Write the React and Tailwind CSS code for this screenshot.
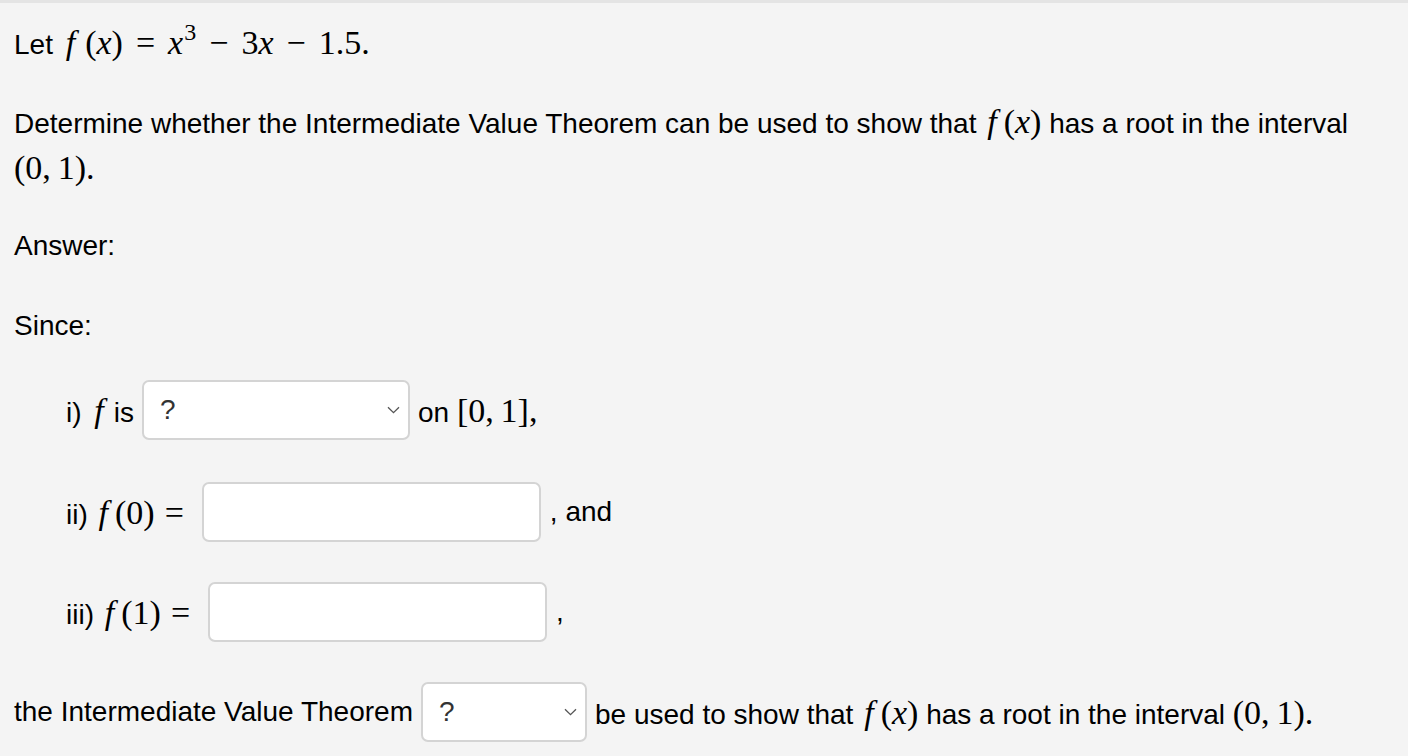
import React from "react";

const M = ({ children, className = "" }) => (
  <span className={"font-['Liberation_Serif',serif] text-[34px] " + className}>{children}</span>
);
const I = ({ children }) => <span className="italic">{children}</span>;
const Op = ({ children }) => <span className="mx-[10px]">{children}</span>;
const OpW = ({ children }) => <span className="mx-[13px]">{children}</span>;
const F = () => <span className="mr-[7px] ml-[3px] italic">f</span>;
const FW = () => <span className="mr-[10px] ml-[5px] italic">f</span>;

const Chevron = () => (
  <svg width="13" height="8" viewBox="0 0 13 8" className="shrink-0">
    <path d="M1 1.2 L6.5 6.7 L12 1.2" fill="none" stroke="#555" strokeWidth="1.3" />
  </svg>
);

const Select = ({ w }) => (
  <div className={"flex h-[60px] items-center justify-between rounded-[7px] border-2 border-[#d4d4d4] bg-white pl-[16px] pr-[8px] " + w}>
    <span className="text-[28px] text-[#333]">?</span>
    <Chevron />
  </div>
);

const Input = ({ w }) => (
  <div className={"h-[60px] rounded-[7px] border-2 border-[#d4d4d4] bg-white " + w} />
);

export default function App() {
  return (
    <div className="min-h-[756px] w-[1408px] overflow-hidden bg-[#f4f4f4] font-['Liberation_Sans',Arial,sans-serif] text-[28px] text-black">
      <div className="h-[3px] bg-[#e4e4e4]" />
      <div className="pl-[14px]">
        <p className="mt-[20px] leading-[40px]">
          Let{" "}
          <M>
            <FW />(<I>x</I>)<OpW>=</OpW><I>x</I>
            <sup className="text-[24px] relative -top-[14px] ml-[1px]">3</sup><OpW>−</OpW>3<I>x</I><OpW>−</OpW>1.5.
          </M>
        </p>
        <p className="mt-[35px] leading-[44px]">
          Determine whether the Intermediate Value Theorem can be used to show that{" "}
          <M>
            <F />(<I>x</I>)
          </M>{" "}
          has a root in the interval
          <br />
          <M>(0,&thinsp;1).</M>
        </p>
        <p className="mt-[34px] leading-[40px]">Answer:</p>
        <p className="mt-[40px] leading-[40px]">Since:</p>

        <div className="ml-[52px] mt-[34px] flex items-center gap-[8px]">
          <span>
            i) <M><FW /></M>is
          </span>
          <Select w="w-[268px]" />
          <span>
            on <M>[0,&thinsp;1],</M>
          </span>
        </div>

        <div className="ml-[52px] mt-[42px] flex items-center gap-[8px]">
          <span>
            ii) <M><F />(0)<Op>=</Op></M>
          </span>
          <Input w="w-[339px]" />
          <span className="ml-[1px]">, and</span>
        </div>

        <div className="ml-[52px] mt-[40px] flex items-center gap-[8px]">
          <span>
            iii) <M><F />(1)<Op>=</Op></M>
          </span>
          <Input w="w-[339px]" />
          <span className="ml-[1px]">,</span>
        </div>

        <div className="mt-[40px] flex items-center gap-[8px]">
          <span>the Intermediate Value Theorem</span>
          <Select w="w-[166px]" />
          <span>
            be used to show that{" "}
            <M>
              <F />(<I>x</I>)
            </M>{" "}
            has a root in the interval <M>(0,&thinsp;1).</M>
          </span>
        </div>
      </div>
    </div>
  );
}
